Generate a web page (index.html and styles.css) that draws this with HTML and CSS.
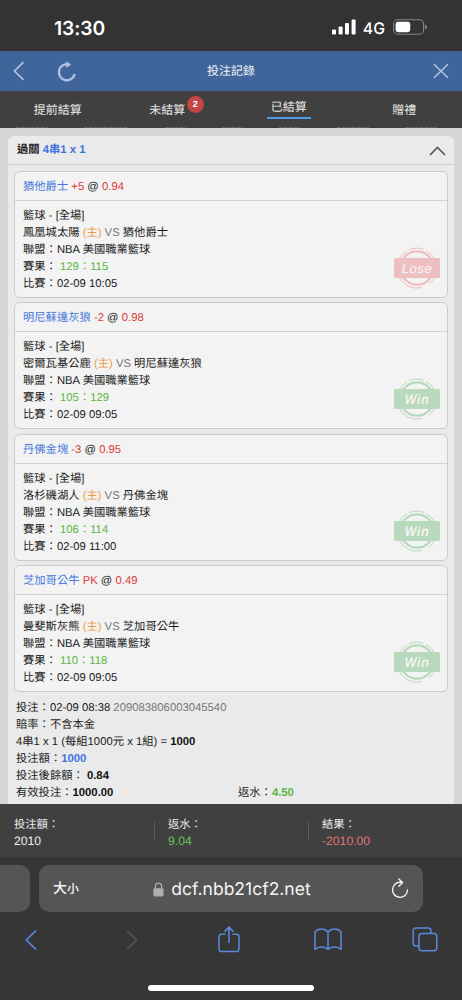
FILE: index.html
```
<!DOCTYPE html>
<html lang="zh-Hant">
<head>
<meta charset="utf-8">
<title>投注記錄</title>
<link rel="stylesheet" href="styles.css">
</head>
<body>
<svg class="defs" width="0" height="0">
  <symbol id="stamp" viewBox="0 0 48 44">
    <g fill="none" stroke="currentColor">
      <circle cx="24" cy="22" r="16.6" stroke-width="2.4"/>
      <path d="M6 13A20 20 0 0 1 14 5M16 3.8A20 20 0 0 1 31 3.4M33 4.5A20 20 0 0 1 42 14M5.5 30A20 20 0 0 0 29 41.5M36 38A20 20 0 0 0 42 31" stroke-width="1"/>
    </g>
    <rect x="1" y="12" width="46" height="20" rx="1.5" fill="currentColor"/>
  </symbol>
</svg>
<div class="phone">
  <header class="status">
    <span class="time">13:30</span>
    <div class="signals">
      <svg width="24" height="16" viewBox="0 0 24 16" fill="#fff"><rect x="0" y="10.5" width="4" height="5" rx="1"/><rect x="6.6" y="7.5" width="4" height="8" rx="1"/><rect x="13" y="4" width="4" height="11.5" rx="1"/><rect x="19.6" y="0.4" width="4" height="15.1" rx="1"/></svg>
      <span class="net">4G</span>
      <svg width="35" height="16" viewBox="0 0 35 16"><rect x=".6" y=".8" width="30" height="14.4" rx="4.2" fill="none" stroke="#858585" stroke-width="1.1"/><rect x="2.6" y="2.8" width="14.6" height="10.4" rx="2.4" fill="#fff"/><path d="M32 5.5q2 .6 2 2.5t-2 2.5z" fill="#858585"/></svg>
    </div>
  </header>
  <nav class="titlebar">
    <div class="nav-left">
      <svg width="12" height="20" viewBox="0 0 12 20"><path d="M10.5 1.2 1.5 10l9 8.8" fill="none" stroke="#b0c2e0" stroke-width="1.7"/></svg>
      <svg width="20" height="21" viewBox="0 0 20 21"><path d="M11.5 3.4A8 8 0 1 0 17.7 13" fill="none" stroke="#b0c2e0" stroke-width="2.3"/><path d="M9.2.2 14.2 3.4 9.2 7z" fill="#b0c2e0"/></svg>
    </div>
    <h1>投注記錄</h1>
    <svg class="close" width="16" height="16" viewBox="0 0 16 16"><path d="M1 1.2 15 14.8M15 1.2 1 14.8" stroke="#b0c2e0" stroke-width="1.6"/></svg>
  </nav>
  <div class="tabs">
    <span class="tab">提前結算</span>
    <span class="tab">未結算<b class="badge">2</b></span>
    <span class="tab active">已結算</span>
    <span class="tab">贈禮</span>
  </div>
  <div class="peek"><i></i><i></i><i></i><i></i><i></i><i></i><i></i></div>

  <main class="content">
    <section class="ticket">
      <div class="ticket-head"><b>過關 <span class="blue">4串1 x 1</span></b>
        <svg width="17" height="10" viewBox="0 0 17 10"><path d="M1 9 8.5 1.4 16 9" fill="none" stroke="#555" stroke-width="1.6"/></svg>
      </div>
      <div class="legs">
        <article class="leg">
          <h2><span class="link">猶他爵士</span> <span class="red">+5</span> @ <span class="red">0.94</span></h2>
          <div class="leg-body">
            <p>籃球 - [全場]</p>
            <p>鳳凰城太陽 <span class="orange">(主)</span> <span class="gray">VS</span> 猶他爵士</p>
            <p>聯盟：NBA 美國職業籃球</p>
            <p>賽果： <span class="green">129：115</span></p>
            <p>比賽：02-09 10:05</p>
          </div>
          <div class="stamp lose"><svg width="48" height="44"><use href="#stamp"/></svg><em>Lose</em></div>
        </article>
        <article class="leg">
          <h2><span class="link">明尼蘇達灰狼</span> <span class="red">-2</span> @ <span class="red">0.98</span></h2>
          <div class="leg-body">
            <p>籃球 - [全場]</p>
            <p>密爾瓦基公鹿 <span class="orange">(主)</span> <span class="gray">VS</span> 明尼蘇達灰狼</p>
            <p>聯盟：NBA 美國職業籃球</p>
            <p>賽果： <span class="green">105：129</span></p>
            <p>比賽：02-09 09:05</p>
          </div>
          <div class="stamp win"><svg width="48" height="44"><use href="#stamp"/></svg><em>Win</em></div>
        </article>
        <article class="leg">
          <h2><span class="link">丹佛金塊</span> <span class="red">-3</span> @ <span class="red">0.95</span></h2>
          <div class="leg-body">
            <p>籃球 - [全場]</p>
            <p>洛杉磯湖人 <span class="orange">(主)</span> <span class="gray">VS</span> 丹佛金塊</p>
            <p>聯盟：NBA 美國職業籃球</p>
            <p>賽果： <span class="green">106：114</span></p>
            <p>比賽：02-09 11:00</p>
          </div>
          <div class="stamp win"><svg width="48" height="44"><use href="#stamp"/></svg><em>Win</em></div>
        </article>
        <article class="leg">
          <h2><span class="link">芝加哥公牛</span> <span class="red">PK</span> @ <span class="red">0.49</span></h2>
          <div class="leg-body">
            <p>籃球 - [全場]</p>
            <p>曼斐斯灰熊 <span class="orange">(主)</span> <span class="gray">VS</span> 芝加哥公牛</p>
            <p>聯盟：NBA 美國職業籃球</p>
            <p>賽果： <span class="green">110：118</span></p>
            <p>比賽：02-09 09:05</p>
          </div>
          <div class="stamp win"><svg width="48" height="44"><use href="#stamp"/></svg><em>Win</em></div>
        </article>
      </div>
      <div class="details">
        <p>投注：02-09 08:38 <span class="gray">209083806003045540</span></p>
        <p>賠率：不含本金</p>
        <p>4串1 x 1 (每組1000元 x 1組) = <b>1000</b></p>
        <p>投注額：<b class="blue">1000</b></p>
        <p>投注後餘額： <b>0.84</b></p>
        <div class="split"><p>有效投注：<b>1000.00</b></p><p>返水：<b class="green">4.50</b></p></div>
      </div>
    </section>
  </main>

  <section class="summary">
    <div><p>投注額：</p><p class="num">2010</p></div>
    <div><p>返水：</p><p class="num pos">9.04</p></div>
    <div><p>結果：</p><p class="num neg">-2010.00</p></div>
  </section>

  <footer class="browser">
    <div class="address-row">
      <div class="prev-tab"></div>
      <div class="address">
        <span class="size">大<small>小</small></span>
        <span class="url"><svg width="11" height="15" viewBox="0 0 11 15"><path d="M2.4 7V4.3a3.1 3.1 0 0 1 6.2 0V7" fill="none" stroke="#aeaeb0" stroke-width="1.3"/><rect x=".4" y="6.2" width="10.2" height="8.2" rx="1.4" fill="#aeaeb0"/></svg>dcf.nbb21cf2.net</span>
        <svg class="reload" width="18" height="21" viewBox="0 0 18 21" fill="none" stroke="#f2f2f2" stroke-width="1.4" stroke-linecap="round"><path d="M10.6 4.5A7.5 7.5 0 1 0 16.5 12M7.8 1 11.6 4.6 7.8 8.2"/></svg>
      </div>
    </div>
    <div class="toolbar">
      <svg width="12" height="20" viewBox="0 0 12 20"><path d="M10.6 1 1.2 10l9.4 9" fill="none" stroke="#5988db" stroke-width="1.7" stroke-linecap="round"/></svg>
      <svg width="12" height="20" viewBox="0 0 12 20"><path d="M1.4 1 10.8 10l-9.4 9" fill="none" stroke="#575757" stroke-width="1.5" stroke-linecap="round"/></svg>
      <svg width="22" height="27" viewBox="0 0 22 27" fill="none" stroke="#5988db" stroke-width="1.5" stroke-linecap="round"><path d="M7 8.3H3.6Q1 8.3 1 10.9V23Q1 25.6 3.6 25.6H18.4Q21 25.6 21 23V10.9Q21 8.3 18.4 8.3H15M11 16.5V1.2M7 5.1l4-4 4 4"/></svg>
      <svg width="28" height="23" viewBox="0 0 28 23" fill="none" stroke="#5988db" stroke-width="1.5" stroke-linejoin="round"><path d="M14 4Q11.5 1 7.5 1T1 4V21.4Q3.5 19 7.5 19T14 21.4Q16.5 19 20.5 19T27 21.4V4Q24.5 1 20.5 1T14 4V21.4"/></svg>
      <svg width="26" height="25" viewBox="0 0 26 25" fill="none" stroke="#5988db" stroke-width="1.5"><path d="M7 19H4Q1.2 19 1.2 16.2V3.8Q1.2 1 4 1H16.2Q19 1 19 3.8V6.5"/><rect x="7" y="6.5" width="17.8" height="17.3" rx="2.8"/></svg>
    </div>
    <div class="home"></div>
  </footer>
</div>
</body>
</html>
```
FILE: styles.css
```
* { box-sizing: border-box; }
body, h1, h2, p { margin: 0; }
body {
  font-family: "Liberation Sans", "Noto Sans CJK TC", sans-serif;
  font-size: 11.3px;
  line-height: 17px;
  color: #1b1b1b;
  text-rendering: geometricPrecision;
}
svg { display: block; flex: none; }
.defs { position: absolute; }
.phone { width: 462px; height: 1000px; overflow: hidden; display: flex; flex-direction: column; background: #363636; }

.status { height: 51px; flex: none; background: #333; color: #fff; display: flex; justify-content: space-between; padding: 17px 34px 0 54px; }
.time { font: 600 19.3px/22px Inter, sans-serif; letter-spacing: -0.1px; }
.signals { display: flex; align-items: flex-start; padding-top: 2px; }
.net { font: 500 15.8px/18px Inter, sans-serif; margin: 1px 8px 0 7px; }

.titlebar { height: 40px; flex: none; background: #40659b; display: grid; grid-template-columns: 1fr auto 1fr; align-items: center; padding: 0 13px; }
.nav-left { display: flex; align-items: center; gap: 32px; }
.titlebar h1 { font-size: 12px; font-weight: 400; color: #f0f3f8; }
.close { justify-self: end; }

.tabs { height: 35px; flex: none; background: #404040; display: grid; grid-template-columns: repeat(4, 1fr); justify-items: center; padding-top: 8px; color: #e6e6e6; font-size: 12px; line-height: 22px; }
.tab { position: relative; height: 22px; }
.tab:nth-child(2) { margin-right: 12px; }
.active { height: 20px; padding: 0 4px; line-height: 16px; border-bottom: 2px solid #4d9ee9; }
.badge { position: absolute; left: 37.5px; top: -3.5px; width: 17px; height: 17px; border-radius: 50%; background: #c34545; color: #fff; font-size: 9px; line-height: 17px; text-align: center; }

.peek { height: 2px; flex: none; background: #404040; display: flex; justify-content: space-between; padding: 1px 25px 0 16px; }
.peek i { width: 21px; height: 1px; background: repeating-linear-gradient(90deg, #666 0 3px, #505050 3px 5px); }
.peek i:nth-child(1), .peek i:nth-child(6), .peek i:nth-child(7) { width: 32px; }
.peek i:nth-child(2) { width: 44px; }

.content { height: 676px; flex: none; background: #d6d6d6; padding: 8px 8px 0; }
.ticket { height: 668px; background: #eaeaea; border-radius: 6px 6px 0 0; }
.ticket-head { height: 29px; border-bottom: 1px solid #cfcfcf; display: flex; align-items: center; justify-content: space-between; padding: 1px 8px 0 9px; }
.legs { display: flex; flex-direction: column; gap: 4.4px; padding: 6px 6px 0; }
.leg { position: relative; height: 127px; background: #f3f3f3; border: 1px solid #cbcbcb; border-radius: 6px; }
.leg h2 { font-size: inherit; font-weight: 400; line-height: 30px; height: 29px; padding-left: 8px; border-bottom: 1px solid #d2d2d2; }
.leg-body { padding: 7px 8px 0; }
.stamp { position: absolute; right: 6px; bottom: 7px; width: 48px; height: 44px; }
.lose { color: #edbfc1; }
.win { color: #b8d9bc; }
.stamp em { position: absolute; inset: 12px 0 0; color: #fbf6f6; font: italic 400 13.2px/21px "Liberation Sans", sans-serif; letter-spacing: 0.5px; text-align: center; }
.stamp.win em { font: italic 500 13.5px/20px "Noto Sans", sans-serif; }

.details { padding: 8px 8px 0; }
.split { display: grid; grid-template-columns: 222px 1fr; }
.details b { color: #111; }
.blue, .details .blue { color: #3e72df; }
.link { color: #4679db; }
.red { color: #dc3c38; }
.orange { color: #ed983f; }
.gray { color: #777; }
.green, .details .green { color: #59b745; }

.summary { height: 53px; flex: none; background: #404040; color: #ededed; display: grid; grid-template-columns: repeat(3, 154px); padding-top: 13px; font-size: 11.3px; }
.summary div { padding-left: 14px; }
.summary div + div { background: linear-gradient(#5c5c5c, #5c5c5c) 0 5px / 1px 18px no-repeat; }
.num { font-size: 12.2px; line-height: 15px; }
.pos { color: #61c65d; }
.neg { color: #df7476; }

.browser { height: 143px; background: #363636; padding-top: 8px; }
.address-row { display: flex; gap: 9px; height: 47px; }
.prev-tab { width: 30px; background: #555; border-radius: 0 10px 10px 0; }
.address { width: 384px; background: #555; border-radius: 10px; display: grid; grid-template-columns: 60px 1fr 60px; align-items: center; padding: 0 14px; color: #f4f4f4; }
.size { font: 500 14px/20px "Noto Sans CJK TC", sans-serif; }
.size small { font-size: 12px; }
.url { display: flex; align-items: center; justify-content: center; gap: 7px; padding: 2px 0 0 2px; font: 400 17.5px/22px Inter, sans-serif; }
.reload { justify-self: end; }
.toolbar { display: grid; grid-template-columns: 101px 92px 96px 98px 26px; align-items: center; height: 27px; margin-top: 14px; padding-left: 25px; }
.home { width: 166px; height: 6px; margin: 32px 0 0 148px; border-radius: 3px; background: #fff; }
```
